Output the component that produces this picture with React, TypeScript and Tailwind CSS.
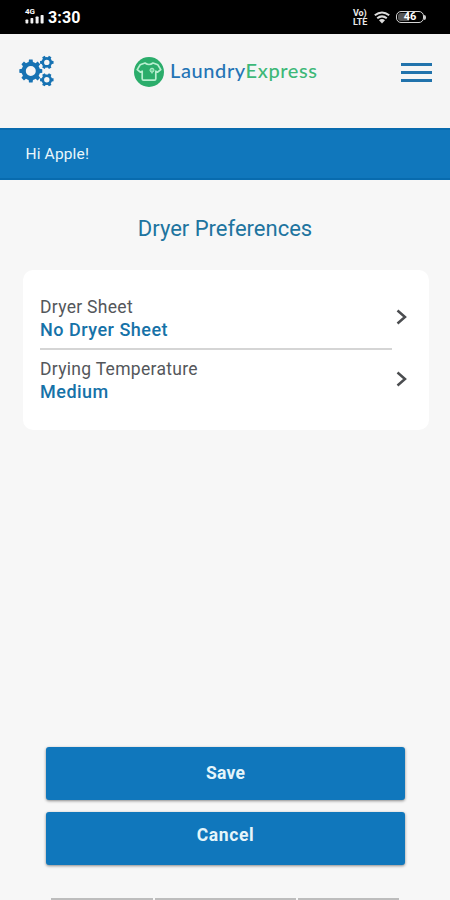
import { useState } from 'react'

const preferences = [
  { label: 'Dryer Sheet', value: 'No Dryer Sheet' },
  { label: 'Drying Temperature', value: 'Medium' },
]

// Outline of a cog with flat teeth around a round hole
function gearPath(cx: number, cy: number, outer: number, inner: number, hole: number, teeth: number) {
  const step = (Math.PI * 2) / teeth
  const points: string[] = []
  for (let i = 0; i < teeth; i++) {
    const a = i * step
    const corners: [number, number][] = [
      [inner, -0.3],
      [outer, -0.2],
      [outer, 0.2],
      [inner, 0.3],
      [inner, 0.5],
    ]
    for (const [r, t] of corners) {
      points.push(`${(cx + r * Math.cos(a + t * step)).toFixed(2)} ${(cy + r * Math.sin(a + t * step)).toFixed(2)}`)
    }
  }
  return `M${points.join('L')}ZM${cx - hole} ${cy}a${hole} ${hole} 0 1 0 ${hole * 2} 0a${hole} ${hole} 0 1 0 ${-hole * 2} 0Z`
}

function GearsIcon() {
  return (
    <svg width="36" height="32" viewBox="0 0 36 32" fill="#1672b3" fillRule="evenodd">
      <path d={gearPath(11.8, 16, 11.6, 9.2, 5, 8)} />
      <path d={gearPath(27.8, 7.4, 6.9, 5.3, 2.7, 6)} />
      <path d={gearPath(27.8, 24.8, 6.9, 5.3, 2.7, 6)} />
    </svg>
  )
}

function ShirtLogo() {
  return (
    <svg width="30" height="30" viewBox="0 0 30 30" fill="none">
      <circle cx="15" cy="15" r="15" fill="#2bad6b" />
      <path
        d="M11 6 6.2 7.8 3.2 12.6l3.4 2.6 1.6-1v7.6q0 1.4 1.4 1.4h10.8q1.4 0 1.4-1.4v-7.6l1.6 1 3.4-2.6-3-4.8L19 6q-4 3-8 0Z"
        stroke="#b8efd0"
        strokeWidth="1.7"
        strokeLinejoin="round"
      />
      <circle cx="18" cy="13.2" r="2" fill="#6fd49c" stroke="#b8efd0" strokeWidth="1" />
      <path d="M18 14.8v1.8" stroke="#b8efd0" strokeWidth="1" />
    </svg>
  )
}

function StatusBar() {
  return (
    <div className="flex h-[34px] shrink-0 items-start justify-between bg-black pr-[24px] pl-[25px] text-white">
      <div className="flex pt-[9px]">
        <div className="flex w-[19px] flex-col">
          <span className="h-[6px] text-[8px] leading-[6px] font-bold">4G</span>
          <svg width="19" height="9" viewBox="0 0 19 9" fill="#f2f2f2">
            <rect x="0.5" y="4.5" width="2.8" height="4" rx="0.7" />
            <rect x="5.5" y="3" width="2.8" height="5.5" rx="0.7" />
            <rect x="10.6" y="1.5" width="3" height="7" rx="0.7" />
            <rect x="15.6" y="0" width="3" height="8.5" rx="0.7" />
          </svg>
        </div>
        <span className="ml-[4px] text-[16px] leading-[18px] font-bold tracking-[0.1px]">3:30</span>
      </div>
      <div className="flex pt-[9px]">
        <p className="w-[16px] text-[9px] leading-[8.5px] font-bold tracking-[-0.1px] whitespace-pre text-[#e8e8e8]">{'Vo)\nLTE'}</p>
        <svg className="mt-[2px] ml-[5px]" width="16" height="14" viewBox="0 0 16 14" fill="none" stroke="#ddd" strokeWidth="2">
          <path d="M0.8 4.3Q8-1.4 15.2 4.3" />
          <path d="M3.2 7.3Q8 3.5 12.8 7.3" />
          <path d="M5 9.2Q8 7 11 9.2L8 12.6Z" fill="#ddd" stroke="none" />
        </svg>
        <div className="mt-[2px] ml-[6px] flex h-[12px] items-center">
          <div className="relative flex h-[12px] w-[28px] items-center justify-center overflow-hidden rounded-[5px] border-[1.5px] border-[#d5d5d5]">
            <div className="absolute inset-y-[1px] left-[1px] w-[11px] rounded-l-[3px] bg-[#555]" />
            <span className="relative text-[11px] leading-[10px] font-bold">46</span>
          </div>
          <div className="h-[5px] w-[2px] rounded-r-[2px] bg-[#ccc]" />
        </div>
      </div>
    </div>
  )
}

export default function App() {
  const [menuOpen, setMenuOpen] = useState(false)

  return (
    <div className="flex h-[900px] w-[450px] flex-col overflow-hidden bg-[#f7f7f7] font-['Roboto','Liberation_Sans',sans-serif]">
      <StatusBar />

      <header className="flex h-[94px] shrink-0 items-start bg-[#f5f5f5] pr-[18px] pl-[19px]">
        <button className="mt-[21px] w-[36px]" aria-label="Settings">
          <GearsIcon />
        </button>
        <div className="mt-[23px] ml-[79px] flex">
          <ShirtLogo />
          <span className="ml-[6px] font-['Lato','Liberation_Sans',sans-serif] text-[20px] leading-[27px] font-medium tracking-[0.6px] whitespace-nowrap text-[#2474b5]">
            Laundry<span className="text-[#3db878]">Express</span>
          </span>
        </div>
        <button
          className="mt-[29px] ml-auto flex w-[31px] flex-col gap-[5px]"
          aria-label="Menu"
          aria-expanded={menuOpen}
          onClick={() => setMenuOpen(!menuOpen)}
        >
          <span className="h-[3px] w-full bg-[#2173ac]" />
          <span className="h-[3px] w-full bg-[#2173ac]" />
          <span className="h-[3px] w-full bg-[#2173ac]" />
        </button>
      </header>

      <div className="h-[52px] shrink-0 border-y-2 border-[#086bae] bg-[#1077bc] pl-[25.5px]">
        <p className="pt-[14px] text-[15.5px] leading-[21px] tracking-[0.15px] text-[#eaf6fb]">Hi Apple!</p>
      </div>

      <main className="flex flex-1 flex-col">
        <h1 className="mt-[35px] text-center text-[22px] leading-[28px] text-[#20749f]">Dryer Preferences</h1>

        <section className="mr-[21px] ml-[23px] mt-[27px] h-[160px] rounded-[10px] bg-white pt-[18px] pr-[20px] pl-[17px]">
          {preferences.map((item, i) => (
            <button key={item.label} className="flex w-full items-start text-left">
              <span className={`flex h-[62px] w-[352px] shrink-0 flex-col pt-[8px] ${i === 0 ? 'border-b-2 border-[#d5d5d5]' : ''}`}>
                <span className="text-[17.5px] leading-[23px] tracking-[0.3px] text-[#54575b]">{item.label}</span>
                <span className="text-[18px] leading-[22px] font-medium tracking-[0.5px] text-[#1672a8]">{item.value}</span>
              </span>
              <svg className="mt-[21px] ml-[3.5px] shrink-0" width="12" height="16" viewBox="0 0 12 16" fill="none" stroke="#4b4d50" strokeWidth="2.5">
                <path d="m1.5 1.5 7.5 6.5-7.5 6.5" />
              </svg>
            </button>
          ))}
        </section>

        <div className="mt-auto flex flex-col gap-[12px] pr-[45px] pl-[46px]">
          <button className="h-[53px] rounded-[3px] bg-[#1077bc] pb-[1px] text-[17.5px] leading-[20px] font-bold tracking-[0.25px] text-[#e5f5fa] shadow-[0_1px_3px_rgba(0,0,0,0.45)]">
            Save
          </button>
          <button className="h-[53px] rounded-[3px] bg-[#1077bc] pb-[8px] text-[17.5px] leading-[20px] font-bold tracking-[0.6px] text-[#e5f5fa] shadow-[0_1px_3px_rgba(0,0,0,0.45)]">
            Cancel
          </button>
        </div>

        {/* top edge of the bottom tab row */}
        <div className="mt-[33px] flex h-[2px] gap-[2px] pl-[51px]">
          <span className="w-[102px] bg-[#bdbdbd]" />
          <span className="w-[141px] bg-[#bdbdbd]" />
          <span className="w-[101px] bg-[#bdbdbd]" />
        </div>
      </main>
    </div>
  )
}
